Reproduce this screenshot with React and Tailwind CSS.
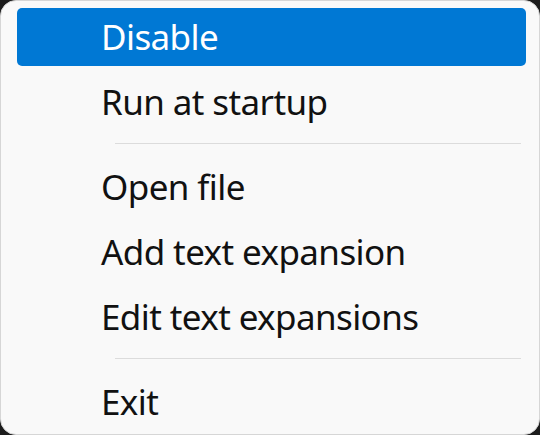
const items = [
  { label: "Disable", active: true },
  { label: "Run at startup" },
  { sep: true },
  { label: "Open file" },
  { label: "Add text expansion" },
  { label: "Edit text expansions" },
  { sep: true },
  { label: "Exit" },
];

export default function App() {
  return (
    <div className="w-[540px] h-[435px] bg-[#1c1c1c]" style={{ fontFamily: '"Noto Sans", "Open Sans", sans-serif' }}>
      <div className="w-full h-full rounded-[16px] border border-[#d6d6d6] bg-[#f9f9f9] pt-[3px] overflow-hidden">
        {items.map((item, i) =>
          item.sep ? (
            <div key={i} className="h-[20px] pt-[9px] pl-[114px] pr-[18px]">
              <div className="h-px bg-[#dcdcdc]" />
            </div>
          ) : (
            <div key={i} className="h-[65px] pl-[16px] pr-[13px] pt-[4px]">
              <div
                className={`h-[58px] rounded-[5px] flex items-center pl-[84px] text-[35px] leading-none tracking-[-0.6px] ${
                  item.active ? "bg-[#0078d4] text-white" : "text-[#111]"
                }`}
              >
                <span className="pb-[2px]">{item.label}</span>
              </div>
            </div>
          )
        )}
      </div>
    </div>
  );
}
